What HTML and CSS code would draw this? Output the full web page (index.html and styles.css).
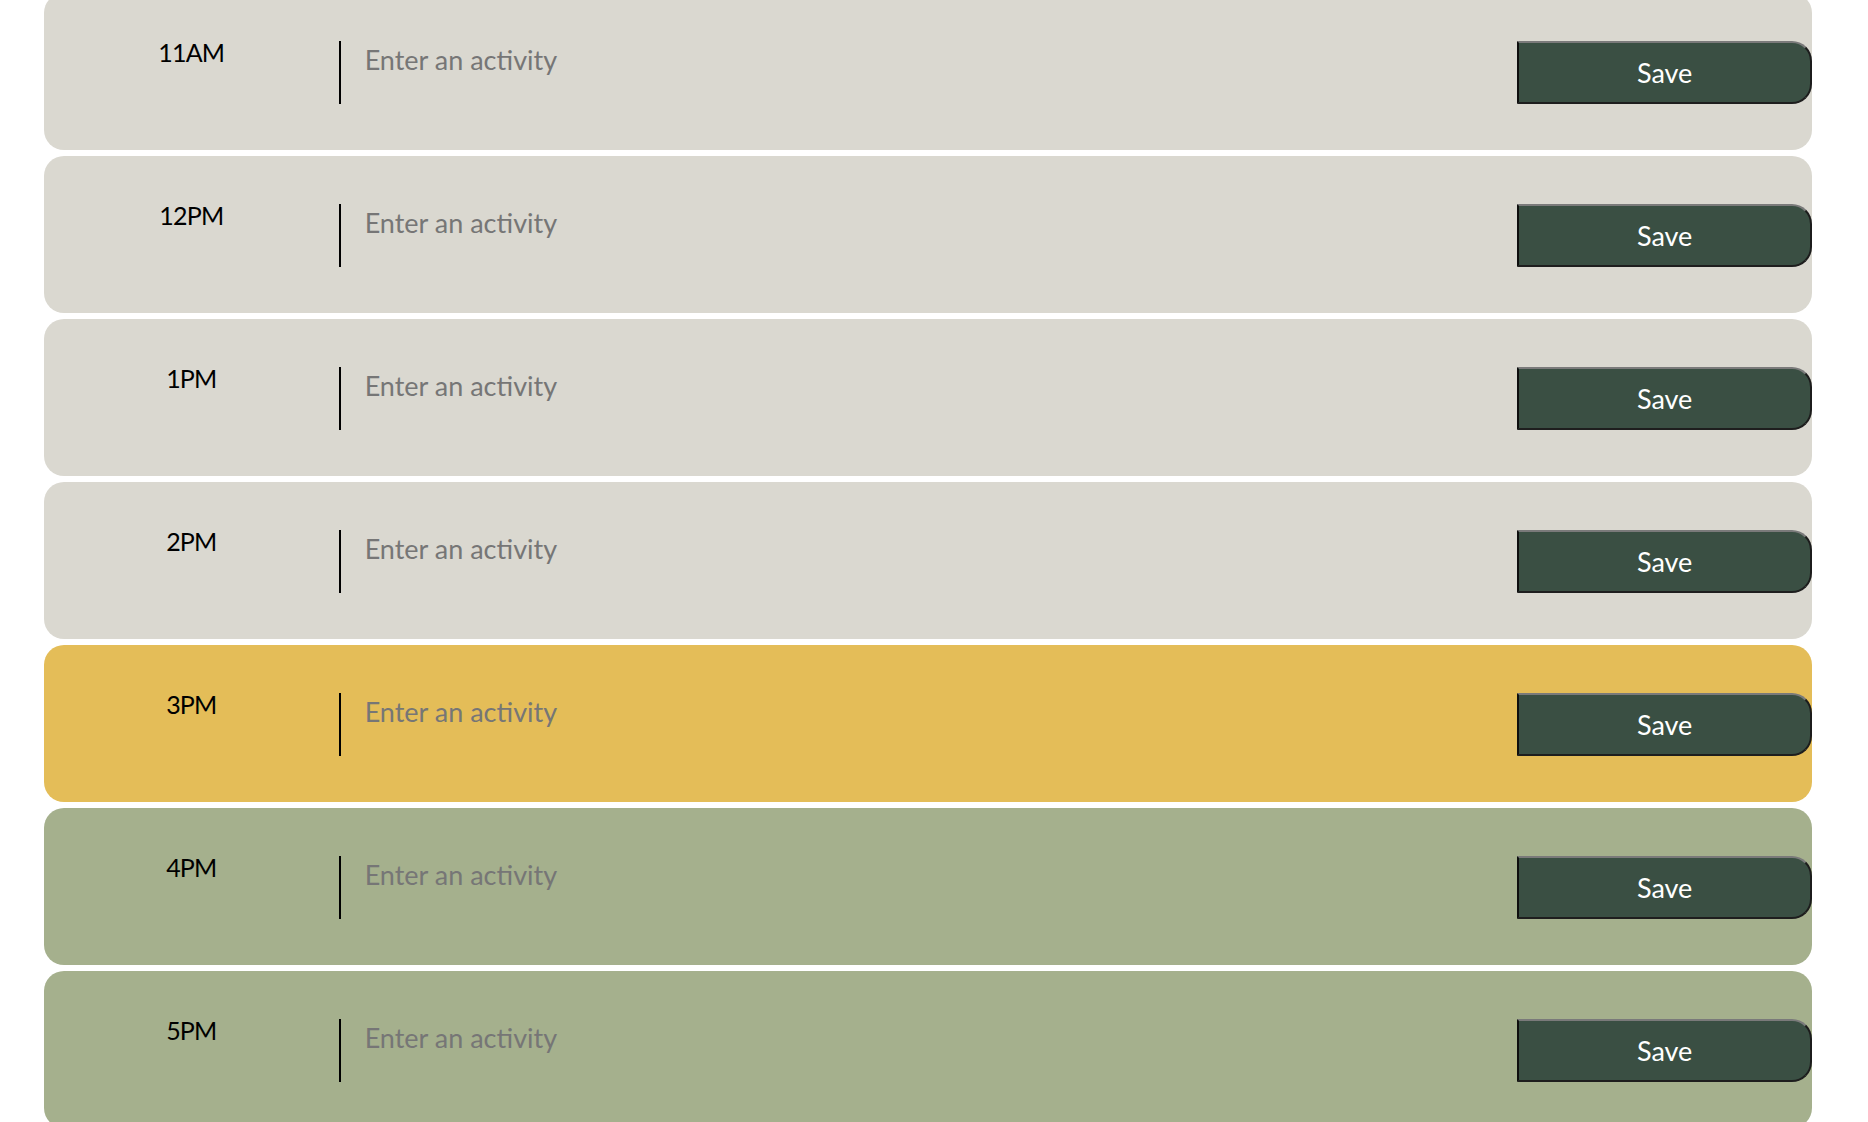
FILE: index.html
```html
<!DOCTYPE html>
<html lang="en">
<head>
<meta charset="utf-8">
<title>Work Day Scheduler</title>
<link rel="stylesheet" href="styles.css">
</head>
<body>
<div class="container">
  <div class="time-block past">
    <div class="hour">11AM</div>
    <textarea class="description" placeholder="Enter an activity"></textarea>
    <button class="save-btn">Save</button>
  </div>
  <div class="time-block past">
    <div class="hour">12PM</div>
    <textarea class="description" placeholder="Enter an activity"></textarea>
    <button class="save-btn">Save</button>
  </div>
  <div class="time-block past">
    <div class="hour">1PM</div>
    <textarea class="description" placeholder="Enter an activity"></textarea>
    <button class="save-btn">Save</button>
  </div>
  <div class="time-block past">
    <div class="hour">2PM</div>
    <textarea class="description" placeholder="Enter an activity"></textarea>
    <button class="save-btn">Save</button>
  </div>
  <div class="time-block present">
    <div class="hour">3PM</div>
    <textarea class="description" placeholder="Enter an activity"></textarea>
    <button class="save-btn">Save</button>
  </div>
  <div class="time-block future">
    <div class="hour">4PM</div>
    <textarea class="description" placeholder="Enter an activity"></textarea>
    <button class="save-btn">Save</button>
  </div>
  <div class="time-block future">
    <div class="hour">5PM</div>
    <textarea class="description" placeholder="Enter an activity"></textarea>
    <button class="save-btn">Save</button>
  </div>
</div>
</body>
</html>
```
FILE: styles.css
```css
html, body {
  margin: 0;
  padding: 0;
  background: #ffffff;
  overflow: hidden;
}

body {
  font-family: Lato, "Open Sans", sans-serif;
  color: #000;
}

.container {
  margin: -7px 56px 0 44px;
  display: flex;
  flex-direction: column;
  gap: 6px;
}

.time-block {
  display: grid;
  grid-template-columns: 2fr 8fr 2fr;
  height: 157px;
  box-sizing: border-box;
  padding: 48px 0 46px;
  border-radius: 20px;
  align-items: start;
}

.past { background: #dad8d0; }
.present { background: #e4bd58; }
.future { background: #a5b08d; }

.hour {
  text-align: center;
  font-size: 25px;
  line-height: 23px;
  letter-spacing: -0.8px;
  color: #000;
}

.description {
  display: block;
  height: 63px;
  box-sizing: border-box;
  margin: 0;
  border: none;
  border-left: 2px solid #000;
  padding: 3px 24px 0;
  background: transparent;
  font-family: Lato, "Open Sans", sans-serif;
  font-size: 27px;
  line-height: 1.2;
  resize: none;
  outline: none;
  color: #000;
}

.description::placeholder {
  color: #767676;
  opacity: 1;
}

.save-btn {
  height: 63px;
  box-sizing: border-box;
  margin: 0;
  border-style: solid;
  border-width: 2px;
  border-color: #7a7a7a #1c1c1c #1e1e1e #0e0e0e;
  border-radius: 0 20px 20px 0;
  background: #3a4f43;
  color: #ffffff;
  font-family: Lato, "Open Sans", sans-serif;
  font-size: 27px;
  line-height: 1;
  padding: 0;
  cursor: pointer;
}
```
